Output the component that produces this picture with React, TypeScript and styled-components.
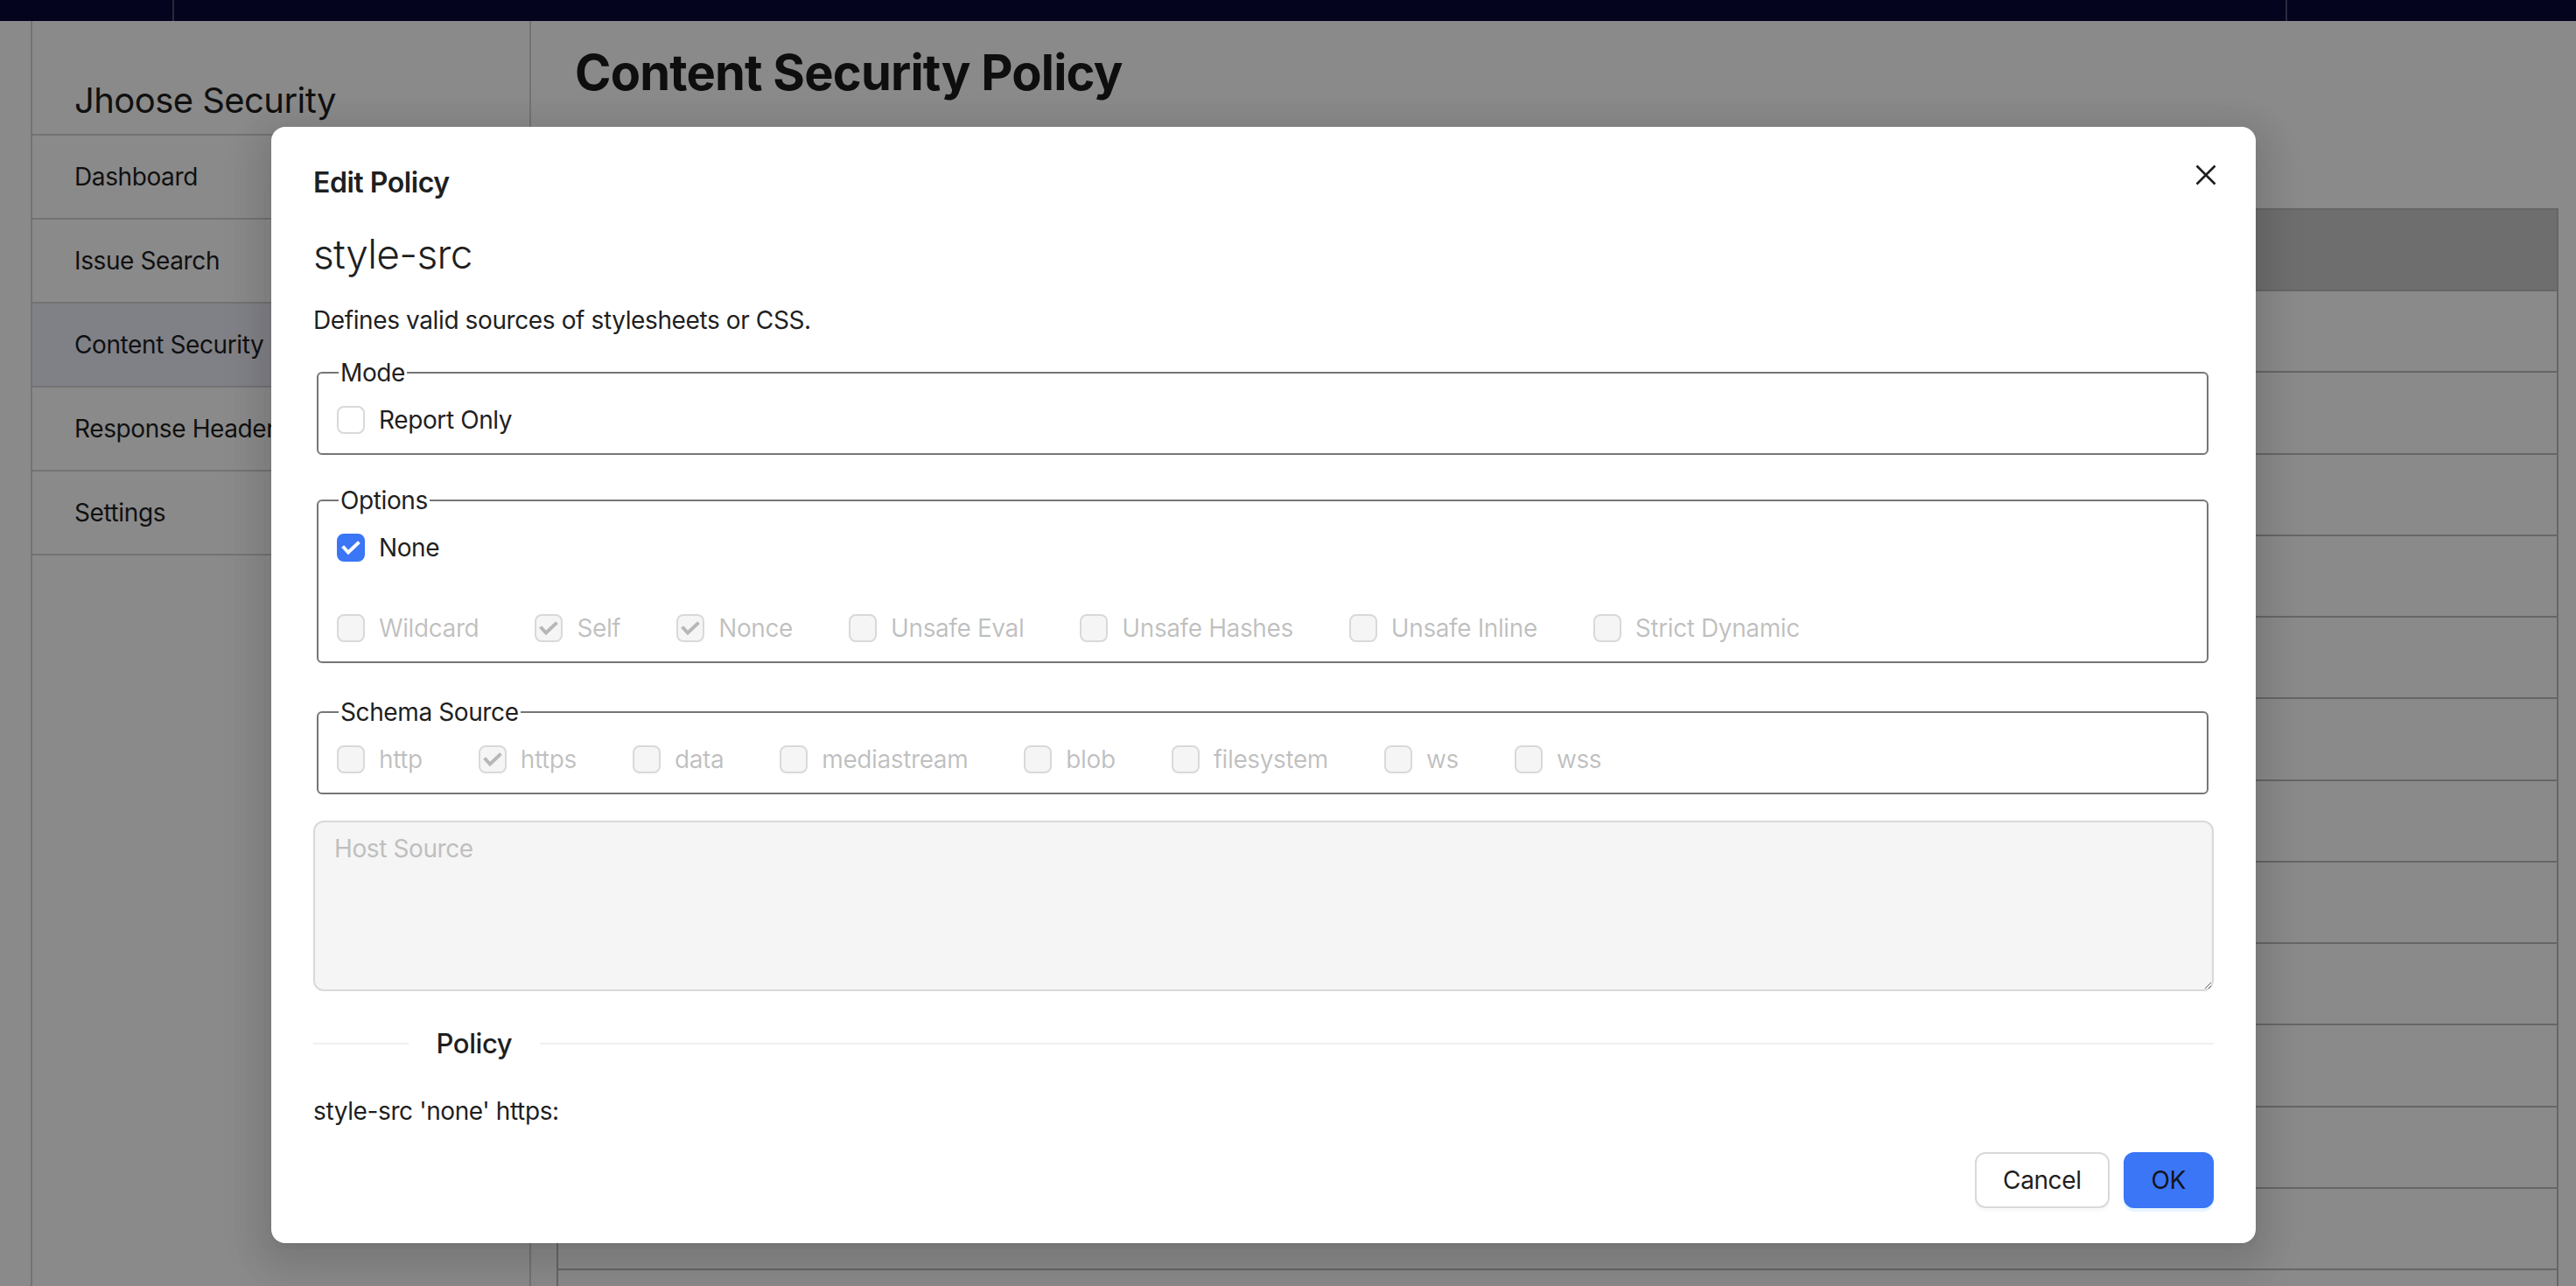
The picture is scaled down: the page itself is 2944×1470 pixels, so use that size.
import React from "react";
import styled, { createGlobalStyle } from "styled-components";

const GlobalStyle = createGlobalStyle`
  html, body { margin: 0; padding: 0; }
  body { font-family: Inter, "Noto Sans", sans-serif; background: #fff; color: #1f1f1f; }
  * { box-sizing: border-box; letter-spacing: -0.014em; }
`;

const Page = styled.div`
  position: relative;
  width: 2944px;
  height: 1470px;
  overflow: hidden;
  display: flex;
  flex-direction: column;
  background: #fff;
`;

const TopBar = styled.div`
  height: 24px;
  flex: none;
  display: flex;
  background: #090938;
`;

const TopSeg = styled.div<{ $w?: number; $last?: boolean }>`
  flex: ${(p) => (p.$w ? `0 0 ${p.$w}px` : "1")};
  border-right: ${(p) => (p.$last ? "none" : "2px solid rgba(255,255,255,0.28)")};
`;

const Body = styled.div`
  flex: 1;
  display: flex;
  min-height: 0;
`;

const LeftRail = styled.div`
  flex: 0 0 37px;
  border-right: 2px solid #d5d5d5;
`;

const Sidebar = styled.nav`
  flex: 0 0 570px;
  border-right: 2px solid #d5d5d5;
`;

const SidebarTitle = styled.div`
  font-size: 40px;
  line-height: 48px;
  padding: 67px 0 14px 48px;
  border-bottom: 2px solid #d5d5d5;
  color: #1f1f1f;
`;

const NavItem = styled.div<{ $active?: boolean }>`
  height: 96px;
  display: flex;
  align-items: center;
  padding-left: 48px;
  font-size: 28px;
  white-space: nowrap;
  overflow: hidden;
  border-bottom: 2px solid #d5d5d5;
  background: ${(p) => (p.$active ? "#eceefa" : "transparent")};
  color: #1f1f1f;
`;

const Main = styled.main`
  flex: 1;
  padding: 26px 20px 0 29px;
  min-width: 0;
`;

const Heading = styled.h1`
  margin: 0 0 0 21px;
  font-size: 56px;
  line-height: 67px;
  font-weight: 700;
  color: #1a1a1a;
`;

const Table = styled.div`
  margin-top: 121px;
  border: 2px solid #bdbdbd;
  border-bottom: none;
`;

const TableHead = styled.div`
  height: 93px;
  background: #cccccc;
  border-bottom: 2px solid #bdbdbd;
`;

const TableRow = styled.div`
  height: 93.25px;
  border-bottom: 2px solid #bdbdbd;
`;

const Mask = styled.div`
  position: absolute;
  inset: 0;
  background: rgba(0, 0, 0, 0.46);
`;

const Modal = styled.div`
  position: absolute;
  left: 310px;
  top: 145px;
  width: 2268px;
  background: #fff;
  border-radius: 16px;
  padding: 40px 48px;
  box-shadow: 0 12px 32px 16px rgba(0, 0, 0, 0.08), 0 6px 12px -8px rgba(0, 0, 0, 0.12),
    0 18px 56px 16px rgba(0, 0, 0, 0.05);
  display: flex;
  flex-direction: column;
`;

const Title = styled.div`
  font-size: 32px;
  font-weight: 600;
  line-height: 48px;
  color: #1f1f1f;
`;

const CloseButton = styled.button`
  position: absolute;
  top: 43px;
  right: 45px;
  width: 24px;
  height: 24px;
  padding: 0;
  border: none;
  background: transparent;
  color: #1f1f1f;
  display: flex;
`;

const PolicyName = styled.h3`
  margin: 33px 0 0;
  font-size: 46px;
  line-height: 48px;
  font-weight: 300;
  color: #1f1f1f;
`;

const Description = styled.p`
  margin: 30px 0 0;
  font-size: 28px;
  line-height: 44px;
`;

const Group = styled.fieldset<{ $top: number }>`
  margin: ${(p) => p.$top}px 6px 0 4px;
  border: 2px solid #767676;
  border-radius: 6px;
  padding: 10px 21px 16px;
  min-width: 0;
`;

const Legend = styled.legend`
  padding: 0 2px;
  margin-left: 2px;
  font-size: 28px;
  line-height: 44px;
  color: #1f1f1f;
`;

const OptionRow = styled.div<{ $spaced?: boolean }>`
  display: flex;
  gap: 64px;
  margin-top: ${(p) => (p.$spaced ? "48px" : "0")};
`;

const CheckItem = styled.label<{ $disabled?: boolean }>`
  display: inline-flex;
  align-items: center;
  gap: 16px;
  height: 44px;
  font-size: 28px;
  line-height: 44px;
  white-space: nowrap;
  color: ${(p) => (p.$disabled ? "rgba(0,0,0,0.25)" : "#1f1f1f")};
`;

const Box = styled.span<{ $checked?: boolean; $disabled?: boolean }>`
  width: 32px;
  height: 32px;
  flex: none;
  border-radius: 8px;
  display: flex;
  border: 2px solid
    ${(p) => (p.$checked && !p.$disabled ? "#3a76f6" : "#d9d9d9")};
  background: ${(p) =>
    p.$disabled ? "#f5f5f5" : p.$checked ? "#3a76f6" : "#fff"};
  color: ${(p) => (p.$disabled ? "rgba(0,0,0,0.25)" : "#fff")};
`;

const HostSource = styled.textarea`
  display: block;
  margin-top: 30px;
  width: 100%;
  height: 195px;
  background: #f5f5f5;
  border: 2px solid #d9d9d9;
  border-radius: 12px;
  padding: 8px 22px;
  font-family: Inter, "Noto Sans", sans-serif;
  font-size: 28px;
  line-height: 44px;
  resize: vertical;
  &::placeholder {
    color: #bfbfbf;
  }
`;

const Divider = styled.div`
  margin-top: 36px;
  display: flex;
  align-items: center;
  &::before {
    content: "";
    width: 5%;
    border-top: 2px solid #f0f0f0;
  }
  &::after {
    content: "";
    flex: 1;
    border-top: 2px solid #f0f0f0;
  }
`;

const DividerText = styled.span`
  padding: 0 32px;
  font-size: 31px;
  font-weight: 500;
  line-height: 48px;
  color: #1f1f1f;
`;

const PolicyText = styled.div`
  margin-top: 31px;
  font-size: 28px;
  line-height: 44px;
`;

const Footer = styled.div`
  margin-top: 25px;
  display: flex;
  justify-content: flex-end;
  gap: 16px;
`;

const Button = styled.button<{ $primary?: boolean }>`
  height: 64px;
  padding: 0 30px;
  border-radius: 12px;
  font-family: Inter, "Noto Sans", sans-serif;
  font-size: 28px;
  border: 2px solid ${(p) => (p.$primary ? "#3a76f6" : "#d9d9d9")};
  background: ${(p) => (p.$primary ? "#3a76f6" : "#fff")};
  color: ${(p) => (p.$primary ? "#141420" : "#1f1f1f")};
  box-shadow: 0 4px 0 ${(p) => (p.$primary ? "rgba(5,145,255,0.1)" : "rgba(0,0,0,0.02)")};
`;

const Check = ({ checked, disabled, label }: { checked?: boolean; disabled?: boolean; label: string }) => (
  <CheckItem $disabled={disabled}>
    <Box $checked={checked} $disabled={disabled}>
      {checked && (
        <svg width="28" height="28" viewBox="0 0 28 28">
          <polyline
            points="6,14 11,19.5 22,9"
            fill="none"
            stroke="currentColor"
            strokeWidth="4"
            strokeLinecap="square"
          />
        </svg>
      )}
    </Box>
    {label}
  </CheckItem>
);

const options = [
  { label: "Wildcard" },
  { label: "Self", checked: true },
  { label: "Nonce", checked: true },
  { label: "Unsafe Eval" },
  { label: "Unsafe Hashes" },
  { label: "Unsafe Inline" },
  { label: "Strict Dynamic" },
];

const schemas = [
  { label: "http" },
  { label: "https", checked: true },
  { label: "data" },
  { label: "mediastream" },
  { label: "blob" },
  { label: "filesystem" },
  { label: "ws" },
  { label: "wss" },
];

const navItems = ["Dashboard", "Issue Search", "Content Security Policy", "Response Headers", "Settings"];

export default function App() {
  return (
    <Page>
      <GlobalStyle />
      <TopBar>
        <TopSeg $w={199} />
        <TopSeg />
        <TopSeg $w={330} $last />
      </TopBar>
      <Body>
        <LeftRail />
        <Sidebar>
          <SidebarTitle>Jhoose Security</SidebarTitle>
          {navItems.map((n) => (
            <NavItem key={n} $active={n === "Content Security Policy"}>
              {n}
            </NavItem>
          ))}
        </Sidebar>
        <Main>
          <Heading>Content Security Policy</Heading>
          <Table>
            <TableHead />
            {Array.from({ length: 13 }).map((_, i) => (
              <TableRow key={i} />
            ))}
          </Table>
        </Main>
      </Body>
      <Mask />
      <Modal>
        <Title>Edit Policy</Title>
        <CloseButton aria-label="Close">
          <svg width="24" height="24" viewBox="0 0 24 24">
            <path d="M1.5 1.5 L22.5 22.5 M22.5 1.5 L1.5 22.5" stroke="currentColor" strokeWidth="2.6" />
          </svg>
        </CloseButton>
        <PolicyName>style-src</PolicyName>
        <Description>Defines valid sources of stylesheets or CSS.</Description>
        <Group $top={16}>
          <Legend>Mode</Legend>
          <OptionRow>
            <Check label="Report Only" />
          </OptionRow>
        </Group>
        <Group $top={30}>
          <Legend>Options</Legend>
          <OptionRow>
            <Check label="None" checked />
          </OptionRow>
          <OptionRow $spaced>
            {options.map((o) => (
              <Check key={o.label} label={o.label} checked={o.checked} disabled />
            ))}
          </OptionRow>
        </Group>
        <Group $top={34}>
          <Legend>Schema Source</Legend>
          <OptionRow>
            {schemas.map((o) => (
              <Check key={o.label} label={o.label} checked={o.checked} disabled />
            ))}
          </OptionRow>
        </Group>
        <HostSource placeholder="Host Source" disabled />
        <Divider>
          <DividerText>Policy</DividerText>
        </Divider>
        <PolicyText>style-src 'none' https:</PolicyText>
        <Footer>
          <Button>Cancel</Button>
          <Button $primary>OK</Button>
        </Footer>
      </Modal>
    </Page>
  );
}
